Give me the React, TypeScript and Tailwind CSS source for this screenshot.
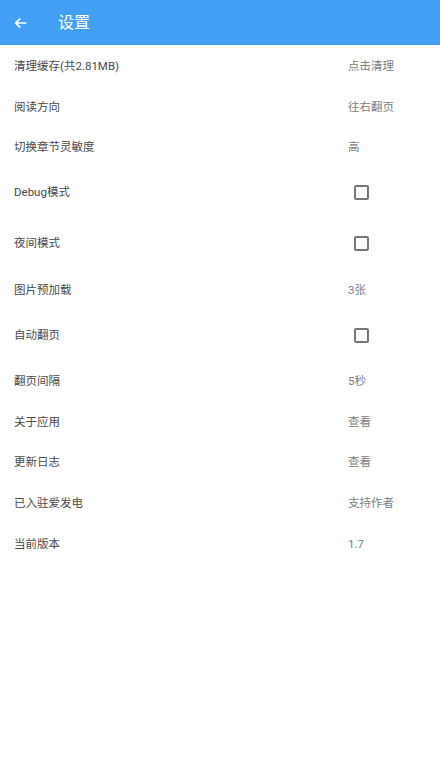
import React from "react";

type Row = {
  label: string;
  value?: string;
  checkbox?: boolean;
  h: string;
};

const rows: Row[] = [
  { label: "清理缓存(共2.81MB)", value: "点击清理", h: "h-[42px]" },
  { label: "阅读方向", value: "往右翻页", h: "h-[40px]" },
  { label: "切换章节灵敏度", value: "高", h: "h-[41px]" },
  { label: "Debug模式", checkbox: true, h: "h-[48px]" },
  { label: "夜间模式", checkbox: true, h: "h-[54px]" },
  { label: "图片预加载", value: "3张", h: "h-[40px]" },
  { label: "自动翻页", checkbox: true, h: "h-[50px]" },
  { label: "翻页间隔", value: "5秒", h: "h-[42px]" },
  { label: "关于应用", value: "查看", h: "h-[40px]" },
  { label: "更新日志", value: "查看", h: "h-[41px]" },
  { label: "已入驻爱发电", value: "支持作者", h: "h-[41px]" },
  { label: "当前版本", value: "1.7", h: "h-[40px]" },
];

const font = { fontFamily: '"Roboto", "Noto Sans CJK SC", sans-serif' };

export default function App() {
  return (
    <div className="min-h-[770px] w-[440px] bg-white" style={font}>
      <header className="flex h-[45px] items-center bg-[#439ff4] text-white">
        <svg className="ml-[13px] h-4 w-4" viewBox="0 0 24 24" fill="none" stroke="currentColor" strokeWidth="2.4">
          <path d="M20 12H5M11 5l-7 7 7 7" />
        </svg>
        <span className="ml-[29px] text-[16px]">设置</span>
      </header>

      <div>
        {rows.map((r) => (
          <div key={r.label} className={`flex items-center ${r.h}`}>
            <span className="ml-[14px] flex-1 pt-px text-[11.5px] text-[#4a4a4a]">{r.label}</span>
            <div className="w-[92px] pt-px text-[11.5px] text-[#808080]">
              {r.checkbox ? (
                <span className="ml-[6px] block h-[15px] w-[15px] rounded-[2px] border-2 border-[#777]" />
              ) : (
                r.value
              )}
            </div>
          </div>
        ))}
      </div>
    </div>
  );
}
